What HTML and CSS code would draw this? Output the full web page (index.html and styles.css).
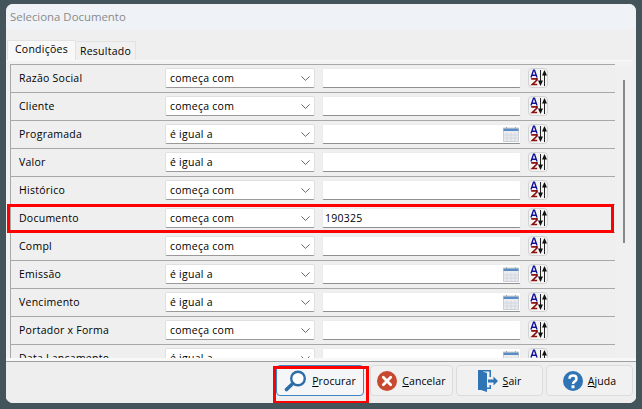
FILE: index.html
```html
<!DOCTYPE html>
<html lang="pt">
<head>
<meta charset="utf-8">
<title>Seleciona Documento</title>
<link rel="stylesheet" href="styles.css">
</head>
<body>
<svg class="defs" width="0" height="0">
  <defs>
    <symbol id="sort" viewBox="0 0 20 20">
      <rect x="0.5" y="0.5" width="19" height="19" rx="3.5" fill="#f4f4f4" stroke="#d2d2d2"/>
      <path d="M3 9.500 5.500 2.200h1L9 9.500M4 7.200h4" fill="none" stroke="#14149a" stroke-width="1.400"/>
      <path d="M3.200 10.800H9V12L4.400 16.500H9.200" fill="none" stroke="#8c1010" stroke-width="1.700"/>
      <path d="M12.500 2v12" stroke="#222" stroke-width="1"/>
      <path d="M10 12.500h5L12.500 18z" fill="#111"/>
      <path d="M16.500 7v11" stroke="#222" stroke-width="1"/>
      <path d="M14 7.500h5L16.500 2z" fill="#111"/>
    </symbol>
    <symbol id="chev" viewBox="0 0 9 5">
      <path d="M.4.400 4.500 4.400 8.600.400" fill="none" stroke="#666" stroke-width="1"/>
    </symbol>
    <symbol id="cal" viewBox="0 0 16 15">
      <rect x="0.500" y="1" width="15" height="13.500" fill="#e8ebef" stroke="#ccd0d6"/>
      <rect x="0.500" y="1.500" width="15" height="2.500" fill="#5a8cc2"/>
      <path d="M3.500 0v2M12.500 0v2" stroke="#9ab" stroke-width="1"/>
      <path d="M4 6v8M8 6v8M12 6v8M1 8h14M1 11h14" stroke="#d4d8de" stroke-width="1"/>
    </symbol>
  </defs>
</svg>
<main class="window">
  <header class="titlebar">Seleciona Documento</header>
  <div class="tabs">
    <span class="tab active">Condições</span>
    <span class="tab">Resultado</span>
  </div>
  <div class="panel">
    <div class="rows">
      <div class="row"><span class="label">Razão Social</span><div class="select">começa com<svg class="chev"><use href="#chev"/></svg></div><div class="input"></div><svg class="sort"><use href="#sort"/></svg></div>
      <div class="row"><span class="label">Cliente</span><div class="select">começa com<svg class="chev"><use href="#chev"/></svg></div><div class="input"></div><svg class="sort"><use href="#sort"/></svg></div>
      <div class="row"><span class="label">Programada</span><div class="select">é igual a<svg class="chev"><use href="#chev"/></svg></div><div class="input dated"><svg class="cal"><use href="#cal"/></svg></div><svg class="sort"><use href="#sort"/></svg></div>
      <div class="row"><span class="label">Valor</span><div class="select">é igual a<svg class="chev"><use href="#chev"/></svg></div><div class="input"></div><svg class="sort"><use href="#sort"/></svg></div>
      <div class="row"><span class="label">Histórico</span><div class="select">começa com<svg class="chev"><use href="#chev"/></svg></div><div class="input"></div><svg class="sort"><use href="#sort"/></svg></div>
      <div class="row"><span class="label">Documento</span><div class="select">começa com<svg class="chev"><use href="#chev"/></svg></div><div class="input">190325</div><svg class="sort"><use href="#sort"/></svg></div>
      <div class="row"><span class="label">Compl</span><div class="select">começa com<svg class="chev"><use href="#chev"/></svg></div><div class="input"></div><svg class="sort"><use href="#sort"/></svg></div>
      <div class="row"><span class="label">Emissão</span><div class="select">é igual a<svg class="chev"><use href="#chev"/></svg></div><div class="input dated"><svg class="cal"><use href="#cal"/></svg></div><svg class="sort"><use href="#sort"/></svg></div>
      <div class="row"><span class="label">Vencimento</span><div class="select">é igual a<svg class="chev"><use href="#chev"/></svg></div><div class="input dated"><svg class="cal"><use href="#cal"/></svg></div><svg class="sort"><use href="#sort"/></svg></div>
      <div class="row"><span class="label">Portador x Forma</span><div class="select">começa com<svg class="chev"><use href="#chev"/></svg></div><div class="input"></div><svg class="sort"><use href="#sort"/></svg></div>
      <div class="row"><span class="label">Data Lançamento</span><div class="select">é igual a<svg class="chev"><use href="#chev"/></svg></div><div class="input dated"><svg class="cal"><use href="#cal"/></svg></div><svg class="sort"><use href="#sort"/></svg></div>
    </div>
    <div class="scrollbar"><div class="thumb"></div></div>
  </div>
  <footer class="footer">
    <button class="btn primary">
      <svg class="ico" width="23" height="22" viewBox="0 0 23 22"><circle cx="14" cy="8.500" r="6.800" fill="#fdfdfd" stroke="#2f6da6" stroke-width="2.400"/><path d="M8.800 13.500 2.500 19.500" stroke="#2f6da6" stroke-width="3.600" stroke-linecap="round"/></svg>
      <span><u>P</u>rocurar</span>
    </button>
    <button class="btn cancel">
      <svg class="ico" width="20" height="20" viewBox="0 0 20 20"><circle cx="10" cy="10" r="10" fill="#c8492f"/><path d="M6.300 6.300l7.400 7.400M13.700 6.300l-7.400 7.400" stroke="#fff" stroke-width="2.800" stroke-linecap="round"/></svg>
      <span><u>C</u>ancelar</span>
    </button>
    <button class="btn">
      <svg class="ico" width="20" height="22" viewBox="0 0 20 22"><path d="M0 0h13v7h-1.500V1.500H5V20l-5-0z" fill="#2f74b5"/><path d="M0 0l9 3v19l-9-3z" fill="#2f74b5"/><path d="M11.500 15h1.500v4h-4v-1.500h2.500z" fill="#2f74b5"/><path d="M10 9.500h5.500V6.500L20 11l-4.500 4.500V12.500H10z" fill="#2f74b5"/></svg>
      <span><u>S</u>air</span>
    </button>
    <button class="btn">
      <svg class="ico" width="20" height="20" viewBox="0 0 20 20"><circle cx="10" cy="10" r="10" fill="#2f74b5"/><path d="M6.500 7.800c0-4.300 7-4.300 7 0 0 3-3.500 2.500-3.500 5.200" fill="none" stroke="#fff" stroke-width="2.500"/><rect x="8.500" y="14.300" width="3" height="3" fill="#fff"/></svg>
      <span><u>A</u>juda</span>
    </button>
  </footer>
  <div class="mark mark-row"></div>
  <div class="mark mark-btn"></div>
</main>
</body>
</html>
```
FILE: styles.css
```css
* { box-sizing: border-box; }
html, body { margin: 0; height: 100%; }
body {
  background: #43555a;
  font-family: "Open Sans", "Noto Sans", sans-serif;
  font-size: 10.5px;
  color: #000;
  overflow: hidden;
  padding: 4px 6px 6px 6px;
}
.defs { position: absolute; }
.window {
  position: relative;
  width: 630px;
  height: 399px;
  background: #efefef;
  border-radius: 7px;
  display: flex;
  flex-direction: column;
  overflow: hidden;
}
.titlebar {
  height: 25px;
  flex: none;
  background: #eff3f7;
  color: #8a8a8a;
  font-size: 11.4px;
  padding: 5px 0 0 4px;
  line-height: 16px;
}
.tabs {
  display: flex;
  align-items: flex-end;
  height: 31px;
  flex: none;
  padding-left: 1px;
}
.tab {
  height: 19px;
  padding: 1px 4px 0;
  border: 1px solid #e2e2e2;
  border-bottom: 0;
  line-height: 17px;
  background: #f0f0f0;
  letter-spacing: .25px;
}
.tab.active {
  height: 20px;
  padding: 0 7px;
  line-height: 17px;
  background: #f8f8f8;
  border-right: 0;
}
.panel {
  flex: 1;
  min-height: 0;
  margin-right: 3px;
  padding: 4px 0 0 4px;
  display: flex;
  background: #f2f2f2;
  border-top: 1px solid #f8f8f8;
  overflow: hidden;
}
.panel .rows { margin-top: -1px; }
.rows {
  width: 605px;
  flex: none;
  overflow: hidden;
  border-left: 1px solid #a8a8a8;
}
.row {
  height: 28px;
  display: flex;
  align-items: flex-start;
  border-top: 1px solid #a8a8a8;
  background: #efefef;
  padding: 3px 0 0 8px;
  letter-spacing: .25px;
}
.label { width: 146px; flex: none; line-height: 20px; }
.select {
  width: 150px;
  height: 20px;
  flex: none;
  background: #fff;
  border: 1px solid #e0e0e0;
  border-bottom-color: #9a9a9a;
  border-radius: 2px;
  padding-left: 4px;
  display: flex;
  align-items: center;
  justify-content: space-between;
  margin-right: 7px;
}
.chev { width: 9px; height: 5px; margin-right: 4px; }
.input {
  width: 199px;
  height: 20px;
  flex: none;
  background: #fff;
  border: 1px solid #ececec;
  border-bottom-color: #8f8f8f;
  border-radius: 2px;
  padding-left: 2px;
  display: flex;
  align-items: center;
  margin-right: 7px;
  line-height: 16px;
}
.input.dated { justify-content: flex-end; }
.cal { width: 16px; height: 15px; margin-right: 1px; }
.sort { width: 20px; height: 20px; flex: none; }
.scrollbar {
  width: 18px;
  flex: none;
  background: #f0f0f0;
  display: flex;
  justify-content: center;
  padding: 15px 1px 0 0;
}
.thumb { width: 2px; height: 163px; background: #888; }
.footer {
  flex: none;
  height: 42px;
  border-top: 1px solid #9f9f9f;
  box-shadow: 0 -3px 0 #f8f8f8;
  background: #eee;
  display: flex;
  gap: 3px;
  padding: 3px 0 0 270px;
}
.btn {
  width: 87px;
  height: 31px;
  background: #f1f1f1;
  border: 1px solid #dcdcdc;
  border-radius: 4px;
  font: inherit;
  letter-spacing: .1px;
  color: #000;
  display: flex;
  align-items: center;
  justify-content: center;
  gap: 5px;
  padding: 0;
}
.btn.primary { width: 88px; border-color: #3d84c4; background: #f4f6f8; margin-right: 3px; }
.btn.cancel { width: 83px; }
.ico { flex: none; }
.mark {
  position: absolute;
  border: 3px solid #f00;
  pointer-events: none;
}
.mark-row { left: 1px; top: 200px; width: 607px; height: 29px; }
.mark-btn { left: 267px; top: 362px; width: 96px; height: 38px; }
```
